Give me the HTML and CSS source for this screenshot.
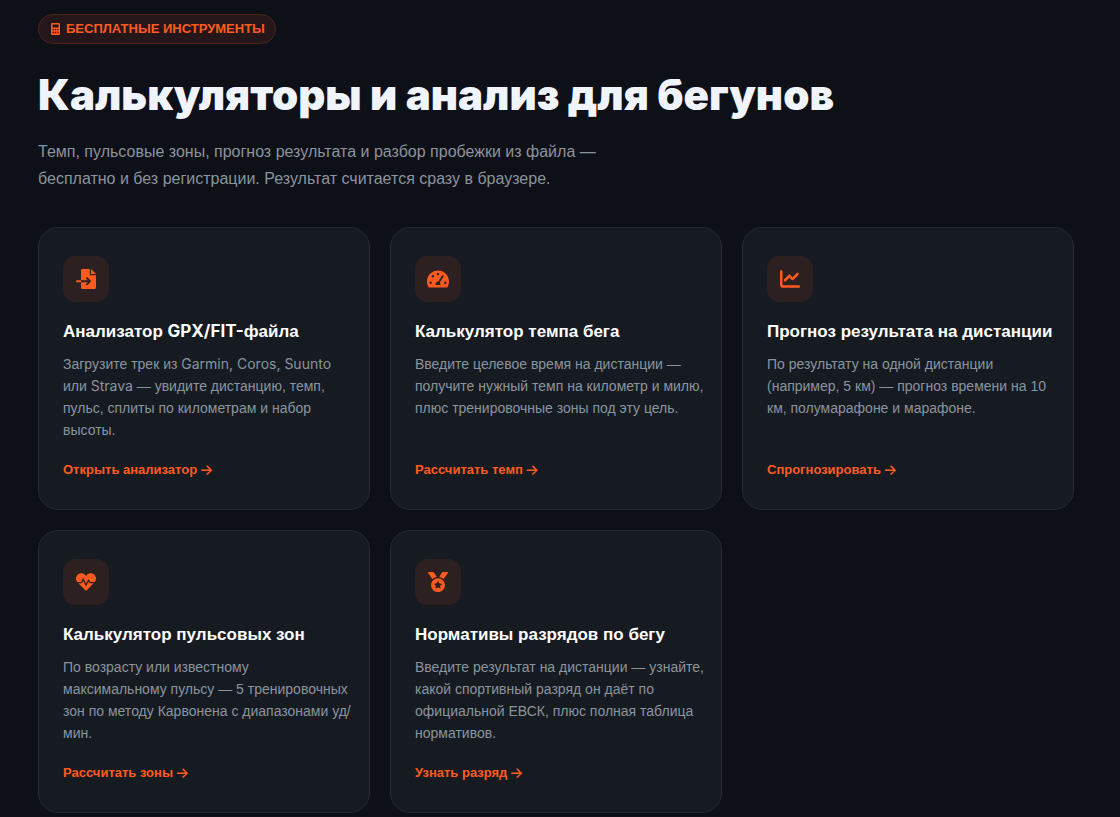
FILE: index.html
```html
<!DOCTYPE html>
<html lang="ru">
<head>
<meta charset="utf-8">
<meta name="viewport" content="width=device-width, initial-scale=1">
<title>Калькуляторы и анализ для бегунов</title>
<link rel="stylesheet" href="styles.css">
</head>
<body>
<main class="page">
  <header class="hero">
    <span class="badge">
      <svg class="badge-icon" viewBox="0 0 384 512" aria-hidden="true"><path fill-rule="evenodd" d="M48 0h288a48 48 0 0 1 48 48v416a48 48 0 0 1-48 48H48a48 48 0 0 1-48-48V48A48 48 0 0 1 48 0zM64 64v128h256V64zM64 256v56h56v-56zM164 256v56h56v-56zM264 256v56h56v-56zM64 376v56h56v-56zM164 376v56h56v-56zM264 376v56h56v-56z"/></svg>
      Бесплатные инструменты
    </span>
    <h1 class="title">Калькуляторы и анализ для бегунов</h1>
    <p class="lead">Темп, пульсовые зоны, прогноз результата и разбор пробежки из файла — бесплатно и без регистрации. Результат считается сразу в браузере.</p>
  </header>

  <section class="grid">
    <article class="card">
      <div class="tile"><svg class="icon" viewBox="0 0 512 512" aria-hidden="true"><path d="M128 40c0-22 18-40 40-40h184v128c0 17.700 14.300 32 32 32h128v312c0 22-18 40-40 40H168c-22 0-40-18-40-40V336h174.100l-39 39c-9.400 9.400-9.400 24.600 0 33.900s24.600 9.400 33.900 0l80-80c9.400-9.400 9.400-24.600 0-33.900l-80-80c-9.400-9.400-24.600-9.400-33.900 0s-9.400 24.600 0 33.900l39 39H128V40zm0 248v48H24c-13.300 0-24-10.700-24-24s10.700-24 24-24h104zM512 128H384V0z"/></svg></div>
      <h2 class="card-title">Анализатор <span class="latin">GPX/FIT-</span>файла</h2>
      <p class="card-text">Загрузите трек из <span class="latin">Garmin, Coros, Suunto</span><br>или <span class="latin">Strava</span> — увидите дистанцию, темп,<br>пульс, сплиты по километрам и набор<br>высоты.</p>
      <a class="card-link" href="#">Открыть анализатор <span class="arrow">→</span></a>
    </article>

    <article class="card">
      <div class="tile"><svg class="icon icon-wide" viewBox="0 0 576 512" aria-hidden="true"><path fill-rule="evenodd" d="M288 32C129 32 0 161 0 320c0 53 14 102 39 145 6 10 16 15 27 15h444c11 0 21-5 27-15 25-43 39-92 39-145C576 161 447 32 288 32zM288 96a32 32 0 1 1 0 64 32 32 0 0 1 0-64zM154 152a32 32 0 1 1 0 64 32 32 0 0 1 0-64zM96 320a32 32 0 1 1 0 64 32 32 0 0 1 0-64zM480 320a32 32 0 1 1 0 64 32 32 0 0 1 0-64zM388 170c9-14 26-17 38-9s15 24 6 38L336 342c10 11 16 25 16 42 0 12-3 23-9 32H233c-6-9-9-20-9-32 0-38 33-68 72-64z"/></svg></div>
      <h2 class="card-title">Калькулятор темпа бега</h2>
      <p class="card-text">Введите целевое время на дистанции — получите нужный темп на километр и милю, плюс тренировочные зоны под эту цель.</p>
      <a class="card-link" href="#">Рассчитать темп <span class="arrow">→</span></a>
    </article>

    <article class="card">
      <div class="tile"><svg class="icon" viewBox="0 0 512 512" aria-hidden="true"><path d="M64 64c0-17.700-14.300-32-32-32S0 46.300 0 64v336c0 44.200 35.800 80 80 80h400c17.700 0 32-14.300 32-32s-14.300-32-32-32H80c-8.800 0-16-7.200-16-16V64zm406.600 86.600c12.500-12.500 12.500-32.800 0-45.300s-32.800-12.500-45.300 0L320 210.700l-57.400-57.400c-12.500-12.500-32.800-12.500-45.300 0l-112 112c-12.500 12.500-12.500 32.800 0 45.300s32.800 12.500 45.300 0L240 221.300l57.400 57.400c12.500 12.500 32.800 12.500 45.300 0l128-128z"/></svg></div>
      <h2 class="card-title">Прогноз результата на дистанции</h2>
      <p class="card-text">По результату на одной дистанции (например, 5 км) — прогноз времени на 10 км, полумарафоне и марафоне.</p>
      <a class="card-link" href="#">Спрогнозировать <span class="arrow">→</span></a>
    </article>

    <article class="card">
      <div class="tile"><svg class="icon" viewBox="0 0 512 512" aria-hidden="true"><path d="M320.200 243.800l-49.700 99.400c-6 12.100-23.400 11.700-28.900-.6l-56.900-126.300-30 71.700H60.600l182.500 186.500c7.100 7.300 18.600 7.300 25.700 0L451.400 288H342.300l-22.100-44.200zM473.700 73.900l-2.400-2.500c-51.500-52.600-135.800-52.600-187.400 0L256 100l-27.900-28.500c-51.500-52.700-135.900-52.700-187.400 0l-2.400 2.400C-10.400 123.700-12.500 203 31 256h102.400l35.900-86.200c5.400-12.900 23.600-13.200 29.400-.4l58.200 129.300 49-97.900c5.900-11.800 22.700-11.800 28.600 0l27.600 55.200H481c43.500-53 41.400-132.300-7.300-182.100z"/></svg></div>
      <h2 class="card-title">Калькулятор пульсовых зон</h2>
      <p class="card-text">По возрасту или известному<br>максимальному пульсу — 5 тренировочных<br>зон по методу Карвонена с диапазонами уд/<wbr>мин.</p>
      <a class="card-link" href="#">Рассчитать зоны <span class="arrow">→</span></a>
    </article>

    <article class="card">
      <div class="tile"><svg class="icon" viewBox="0 0 512 512" aria-hidden="true"><path d="M223.750 130.750L154.620 15.540A31.997 31.997 0 0 0 127.180 0H16.030C3.080 0-4.500 14.570 2.920 25.180l111.270 158.960c29.720-27.770 67.520-46.830 109.560-53.390zM495.970 0H384.820c-11.240 0-21.660 5.900-27.440 15.540l-69.130 115.210c42.040 6.560 79.840 25.620 109.560 53.380L509.080 25.180C516.500 14.570 508.920 0 495.970 0zM256 160c-97.200 0-176 78.800-176 176s78.800 176 176 176 176-78.800 176-176-78.800-176-176-176zm92.520 157.260l-37.930 36.960 8.970 52.220c1.600 9.360-8.260 16.510-16.650 12.090L256 393.880l-46.900 24.650c-8.400 4.450-18.250-2.740-16.650-12.090l8.970-52.220-37.930-36.960c-6.820-6.640-3.050-18.230 6.350-19.590l52.430-7.640 23.430-47.520c2.110-4.280 6.190-6.390 10.280-6.390 4.110 0 8.220 2.140 10.330 6.390l23.430 47.520 52.430 7.640c9.400 1.360 13.170 12.950 6.350 19.590z"/></svg></div>
      <h2 class="card-title">Нормативы разрядов по бегу</h2>
      <p class="card-text">Введите результат на дистанции — узнайте, какой спортивный разряд он даёт по официальной ЕВСК, плюс полная таблица нормативов.</p>
      <a class="card-link" href="#">Узнать разряд <span class="arrow">→</span></a>
    </article>
  </section>
</main>
</body>
</html>
```
FILE: styles.css
```css
* { box-sizing: border-box; }

body {
  margin: 0;
  background: #0d1017;
  color: #f0f4fc;
  font-family: "Liberation Sans", Arial, sans-serif;
}

.page { padding: 14px 46px 4px 38px; }

.hero {
  display: flex;
  flex-direction: column;
  align-items: flex-start;
}

.badge {
  display: inline-flex;
  align-items: center;
  gap: 6px;
  height: 30px;
  padding: 0 10px 0 12px;
  border: 1px solid #4c241a;
  border-radius: 15px;
  background: #251719;
  color: #ff5a1f;
  font-size: 13px;
  font-weight: 700;
  line-height: 16px;
  text-transform: uppercase;
}

.badge-icon { width: 9px; height: 12px; fill: currentColor; }

.title {
  margin: 27px 0 0;
  font-family: Inter, "Liberation Sans", sans-serif;
  font-size: 42px;
  font-weight: 900;
  line-height: 48px;
}

.lead {
  max-width: 560px;
  margin: 19px 0 0;
  color: #8b949e;
  font-size: 16px;
  line-height: 27px;
}

.grid {
  display: grid;
  grid-template-columns: repeat(3, minmax(0, 1fr));
  gap: 20px;
  margin-top: 35px;
}

.card {
  display: flex;
  flex-direction: column;
  align-items: flex-start;
  padding: 28px 10px 28px 24px;
  border: 1px solid #262a31;
  border-radius: 20px;
  background: #161b22;
}

.tile {
  display: grid;
  place-items: center;
  width: 46px;
  height: 46px;
  border-radius: 13px;
  background: #2d2021;
}

.icon { width: 20px; height: 20px; fill: #ff5a1f; }
.icon-wide { width: 22px; }

.latin { font-family: Inter, sans-serif; line-height: 1; }

.card-title {
  margin: 19px 0 0;
  font-size: 17px;
  font-weight: 700;
  line-height: 22px;
  color: #ffffff;
}

.card-text {
  margin: 10px 0 18px;
  color: #8b949e;
  font-size: 14px;
  line-height: 22px;
}

.card-link {
  display: flex;
  align-items: center;
  gap: 2px;
  margin-top: auto;
  color: #ff5a1f;
  font-size: 13px;
  font-weight: 700;
  line-height: 22px;
  text-decoration: none;
}

.arrow {
  font-family: Inter, sans-serif;
  font-size: 15px;
  font-weight: 500;
}
```
